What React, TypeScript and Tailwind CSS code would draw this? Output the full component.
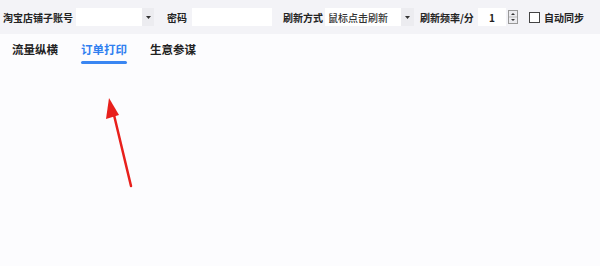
const font = { fontFamily: '"Noto Sans CJK SC", "Noto Sans", sans-serif' };

function Caret() {
  return (
    <svg width="5" height="3" viewBox="0 0 5 3">
      <polygon points="0,0 5,0 2.5,3" fill="#333" />
    </svg>
  );
}

export default function App() {
  return (
    <div className="w-[600px] h-[266px] bg-[#fcfcfe] text-[#222]" style={font}>
      {/* Toolbar */}
      <div className="h-[34px] bg-[#f3f3f7] flex items-center text-[10px] font-bold">
        <span className="ml-[3px] w-[72px]">淘宝店铺子账号</span>
        <div className="h-[18px] w-[66px] bg-white ml-[1px]" />
        <div className="h-[18px] w-[12px] bg-[#ececf0] flex items-center justify-center">
          <Caret />
        </div>
        <span className="ml-[13px] w-[25px]">密码</span>
        <div className="h-[18px] w-[80px] bg-white" />
        <span className="ml-[11px] w-[42px]">刷新方式</span>
        <div className="h-[18px] w-[76px] bg-white flex items-center pl-[3px] font-medium text-[10px] text-[#333]">
          鼠标点击刷新
        </div>
        <div className="h-[18px] w-[13px] bg-[#ececf0] flex items-center justify-center">
          <Caret />
        </div>
        <span className="ml-[6px] w-[58px]">刷新频率/分</span>
        <div className="h-[18px] w-[28px] bg-white flex items-center justify-center">1</div>
        <svg className="ml-[2px]" width="10" height="14" viewBox="0 0 10 14">
          <rect x="0.5" y="0.5" width="9" height="13" fill="#ececf0" stroke="#999" />
          <line x1="1" y1="7" x2="9" y2="7" stroke="#bbb" />
          <polygon points="3,5 7,5 5,3" fill="#333" />
          <polygon points="3,9 7,9 5,11" fill="#333" />
        </svg>
        <div className="ml-[11px] h-[11px] w-[11px] border border-[#444] bg-white" />
        <span className="ml-[4px]">自动同步</span>
      </div>

      {/* Tabs */}
      <div className="flex items-start pl-[12px] pt-[7px] gap-[23px] text-[11.5px] font-bold">
        <div className="flex flex-col">
          <span className="leading-[17px]">流量纵横</span>
        </div>
        <div className="flex flex-col text-[#2f7ff0]">
          <span className="leading-[17px]">订单打印</span>
          <div className="mt-[3px] h-[3px] bg-[#3a86f2] rounded-full" />
        </div>
        <div className="flex flex-col">
          <span className="leading-[17px]">生意参谋</span>
        </div>
      </div>

      {/* Annotation arrow */}
      <svg className="absolute left-0 top-0" width="600" height="266" viewBox="0 0 600 266">
        <line x1="131" y1="186" x2="114" y2="115" stroke="#e8201c" strokeWidth="2.5" strokeLinecap="round" />
        <polygon points="109,98 106,119 119,115" fill="#e8201c" />
      </svg>
    </div>
  );
}
